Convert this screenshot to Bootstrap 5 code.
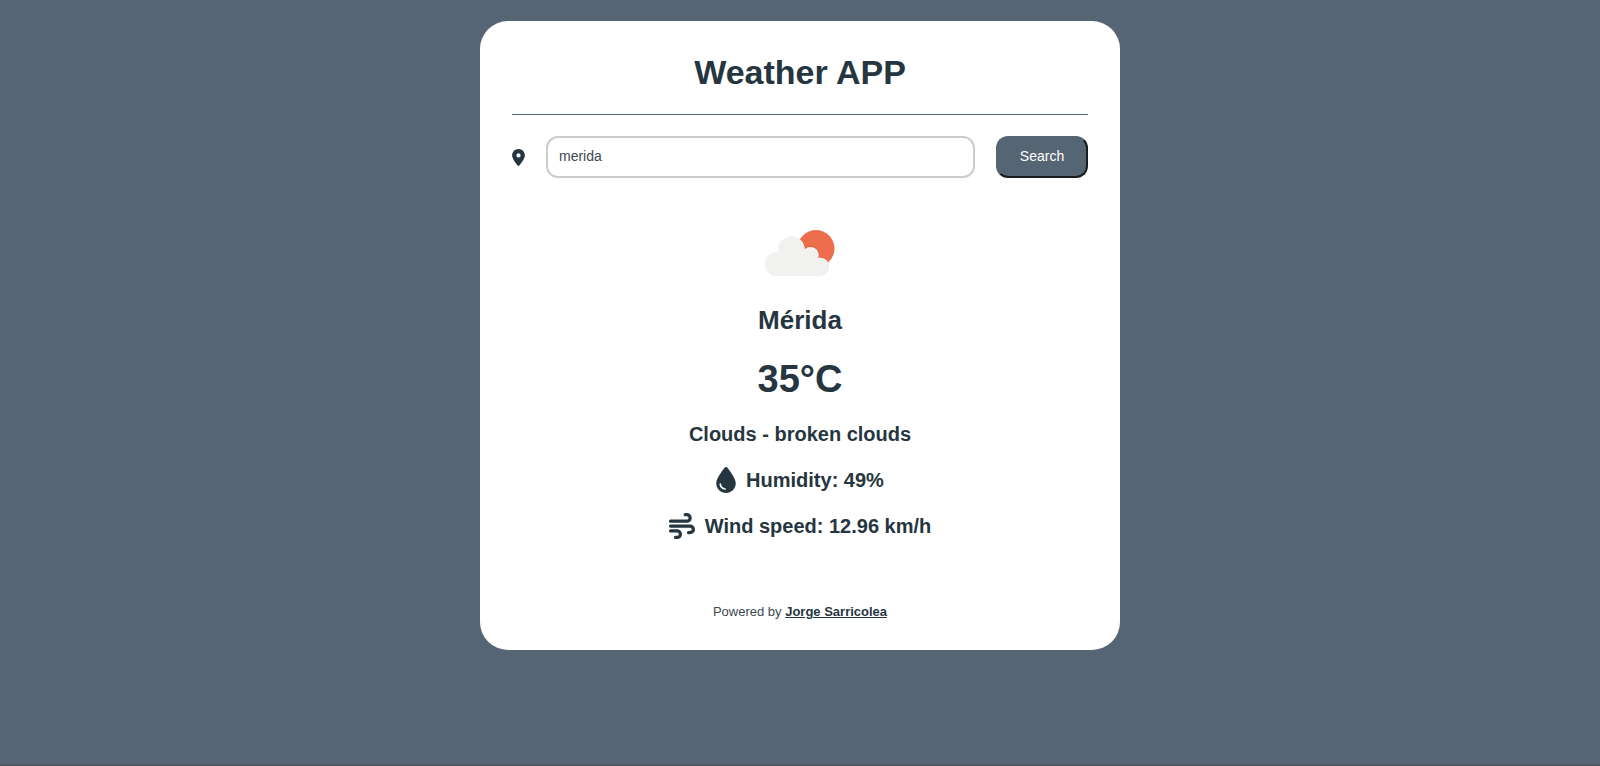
<!DOCTYPE html>
<html lang="en">
<head>
<meta charset="utf-8">
<meta name="viewport" content="width=device-width, initial-scale=1">
<title>Weather APP</title>
<link href="https://cdn.jsdelivr.net/npm/bootstrap@5.3.0/dist/css/bootstrap.min.css" rel="stylesheet">
<style>
  :root { --slate: #566573; --ink: #263640; }
  body { background: var(--slate); color: var(--ink); font-family: "Liberation Sans", Arial, sans-serif; border-bottom: 1px solid #4a4e5a; }
  .panel { width: 40%; min-width: 340px; border-radius: 28px; margin-top: 21px; padding: 32px 32px 30px; }
  .app-title { font-size: 34px; line-height: 38px; padding-bottom: 23px; border-bottom: 1px solid var(--slate); }
  .search-row { gap: 21px; margin-top: 21px; font-size: 14px; }
  .search-row .form-control { height: 42px; font-size: 14px; color: #3c4850; border: 2px solid #ccc; border-radius: 12px; padding: 0 11px 2px; }
  .search-btn { width: 92px; height: 42px; padding-bottom: 2px; color: #fff; background: var(--slate); border: 2px solid; border-color: #566573 #161c20 #161c20 #566573; border-radius: 12px; }
  .sky { margin-top: 52px; }
  .city { font-size: 26px; line-height: 30px; margin-top: 29px; }
  .temp { font-size: 38px; line-height: 44px; margin-top: 22px; }
  .detail { font-size: 20px; line-height: 26px; gap: 10px; margin-top: 20px; }
  .credit { font-size: 13px; line-height: 16px; margin-top: 65px; color: #3c4850; }
  .credit a { color: var(--ink); }
</style>
</head>
<body class="min-vh-100">
<main class="d-flex justify-content-center">
  <section class="panel bg-white text-center">
    <h1 class="app-title fw-bold mb-0">Weather APP</h1>
    <form class="search-row d-flex align-items-center" onsubmit="return false">
      <label for="place" aria-label="Location" class="d-flex">
        <svg width="13" height="17" viewBox="0 0 384 512" fill="currentColor" aria-hidden="true"><path d="M215.700 499.200C267 435 384 279.400 384 192C384 86 298 0 192 0S0 86 0 192c0 87.400 117 243 168.300 307.200c12.300 15.300 35.100 15.300 47.400 0zM192 128a64 64 0 1 1 0 128 64 64 0 1 1 0-128z"/></svg>
      </label>
      <input id="place" class="form-control flex-fill" type="text" value="merida">
      <button class="search-btn flex-shrink-0" type="submit">Search</button>
    </form>
    <svg class="sky d-block mx-auto" width="70" height="46" viewBox="766 230 70 46" role="img" aria-label="Broken clouds">
      <defs><clipPath id="sun"><circle cx="817" cy="248.500" r="18.500"/></clipPath></defs>
      <circle cx="817" cy="248.500" r="18.500" fill="#ec6e4c"/>
      <g fill="#e2603e" clip-path="url(#sun)">
        <circle cx="792.500" cy="249.500" r="14.200"/>
        <circle cx="811.500" cy="255.200" r="9.200"/>
        <circle cx="821" cy="266.800" r="10.300"/>
      </g>
      <g fill="#f1f1ef">
        <circle cx="778" cy="264" r="12"/>
        <circle cx="792.500" cy="249.500" r="13.300"/>
        <circle cx="811.500" cy="255.200" r="8.300"/>
        <circle cx="821" cy="266.700" r="9.300"/>
        <path d="M778 276V252H792L805 248L812 254L821 262V276z"/>
      </g>
    </svg>
    <h2 class="city fw-bold mb-0">Mérida</h2>
    <p class="temp fw-bold mb-0">35°C</p>
    <p class="detail fw-bold mb-0">Clouds - broken clouds</p>
    <p class="detail fw-bold mb-0 d-flex justify-content-center align-items-center">
      <svg width="20" height="26" viewBox="0 0 384 512" fill="currentColor" aria-hidden="true"><path d="M192 512C86 512 0 426 0 320C0 228.800 130.200 57.700 166.600 11.700C172.600 4.200 181.500 0 191.100 0h1.800c9.600 0 18.500 4.200 24.500 11.700C253.800 57.700 384 228.800 384 320c0 106-86 192-192 192zM96 336c0-8.800-7.200-16-16-16s-16 7.200-16 16c0 61.900 50.100 112 112 112c8.800 0 16-7.200 16-16s-7.200-16-16-16c-44.200 0-80-35.800-80-80z"/></svg>
      <span>Humidity: 49%</span>
    </p>
    <p class="detail fw-bold mb-0 d-flex justify-content-center align-items-center">
      <svg width="26" height="26" viewBox="0 0 512 512" fill="currentColor" aria-hidden="true"><path d="M288 32c0 17.700 14.300 32 32 32h32c17.700 0 32 14.300 32 32s-14.300 32-32 32H32c-17.700 0-32 14.300-32 32s14.300 32 32 32H352c53 0 96-43 96-96s-43-96-96-96H320c-17.700 0-32 14.300-32 32zm64 352c0 17.700 14.300 32 32 32h32c53 0 96-43 96-96s-43-96-96-96H32c-17.700 0-32 14.300-32 32s14.300 32 32 32H416c17.700 0 32 14.300 32 32s-14.300 32-32 32H384c-17.700 0-32 14.300-32 32zM128 512h32c53 0 96-43 96-96s-43-96-96-96H32c-17.700 0-32 14.300-32 32s14.300 32 32 32H160c17.700 0 32 14.300 32 32s-14.300 32-32 32H128c-17.700 0-32 14.300-32 32s14.300 32 32 32z"/></svg>
      <span>Wind speed: 12.96 km/h</span>
    </p>
    <p class="credit mb-0">Powered by <a class="fw-bold" href="#">Jorge Sarricolea</a></p>
  </section>
</main>
<script src="https://cdn.jsdelivr.net/npm/bootstrap@5.3.0/dist/js/bootstrap.bundle.min.js"></script>
</body>
</html>
